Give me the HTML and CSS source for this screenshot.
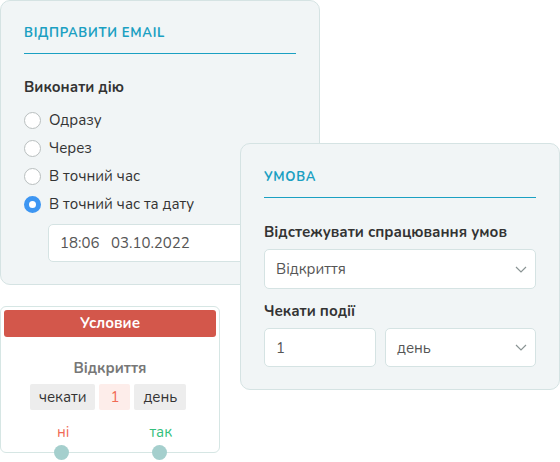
FILE: index.html
```html
<!DOCTYPE html>
<html lang="uk">
<head>
<meta charset="utf-8">
<link rel="stylesheet" href="styles.css">
</head>
<body>
<div class="canvas">
  <section class="card card-email">
    <h2 class="card-title">ВІДПРАВИТИ EMAIL</h2>
    <div class="label">Виконати дію</div>
    <ul class="radios">
      <li><span class="radio"></span>Одразу</li>
      <li><span class="radio"></span>Через</li>
      <li><span class="radio"></span>В точний час</li>
      <li><span class="radio checked"></span>В точний час та дату</li>
    </ul>
    <div class="field datetime">18:06&nbsp;&nbsp;&nbsp;03.10.2022</div>
  </section>

  <section class="node">
    <div class="node-head">Условие</div>
    <div class="node-event">Відкриття</div>
    <div class="chips">
      <span class="chip">чекати</span>
      <span class="chip chip-num">1</span>
      <span class="chip">день</span>
    </div>
    <div class="outs">
      <span class="out out-no">ні</span>
      <span class="out out-yes">так</span>
    </div>
    <span class="port port-no"></span>
    <span class="port port-yes"></span>
  </section>

  <section class="card card-cond">
    <h2 class="card-title">УМОВА</h2>
    <div class="label">Відстежувати спрацювання умов</div>
    <div class="field select">Відкриття<svg class="chev" viewBox="0 0 12 7" width="12" height="7"><path d="M1 1l5 5 5-5" fill="none" stroke="#8a9494" stroke-width="1.2"/></svg></div>
    <div class="label label2">Чекати події</div>
    <div class="row">
      <div class="field num">1</div>
      <div class="field select unit">день<svg class="chev" viewBox="0 0 12 7" width="12" height="7"><path d="M1 1l5 5 5-5" fill="none" stroke="#8a9494" stroke-width="1.2"/></svg></div>
    </div>
  </section>
</div>
</body>
</html>
```
FILE: styles.css
```css
* { box-sizing: border-box; }
html, body { margin: 0; padding: 0; background: #fff; }
body {
  font-family: "Nunito", "Lato", "Noto Sans", sans-serif;
  color: #333;
  width: 560px;
  height: 462px;
  overflow: hidden;
}
.canvas { position: relative; width: 560px; height: 462px; }

.card {
  position: absolute;
  background: #f1f5f6;
  border: 1px solid #d5e3e3;
  border-radius: 10px;
  padding: 0 23px;
}
.card-email { left: 0; top: 0; width: 320px; height: 285px; }
.card-cond { left: 240px; top: 143px; width: 320px; height: 247px; }

.card-title {
  margin: 0;
  font-size: 13px;
  font-weight: 700;
  letter-spacing: 0.7px;
  color: #1ba0c2;
  border-bottom: 1px solid #1ba0c2;
}
.card-email .card-title { padding: 23px 0 11px; }
.card-cond .card-title { padding: 24px 0 11px; }

.label {
  font-size: 15px;
  font-weight: 700;
  color: #333;
  line-height: 20px;
}
.card-email .label { margin-top: 23px; }
.card-cond .label { margin-top: 24px; }
.card-cond .label2 { margin-top: 12px; }

.radios { list-style: none; margin: 9px 0 0; padding: 0; }
.radios li {
  display: flex;
  align-items: center;
  height: 28px;
  font-size: 15px;
  color: #333;
}
.radio {
  width: 17px;
  height: 17px;
  border-radius: 50%;
  border: 1px solid #b9bfbf;
  background: #fff;
  margin-right: 8px;
  flex: none;
}
.radio.checked {
  border: 5px solid #3d96f2;
  background: #fff;
}

.field {
  background: #fff;
  border: 1px solid #d5e3e3;
  border-radius: 5px;
  font-size: 15px;
  color: #555;
  display: flex;
  align-items: center;
  padding: 0 11px;
}
.datetime {
  margin: 6px 0 0 24px;
  height: 38px;
  width: 260px;
}
.select {
  margin-top: 7px;
  height: 40px;
  justify-content: space-between;
  padding-right: 8px;
}
.row { display: flex; gap: 9px; margin-top: 7px; }
.row .field { height: 39px; margin-top: 0; }
.num { width: 112px; }
.unit { flex: 1; }
.chev { flex: none; }

.node {
  position: absolute;
  left: 0;
  top: 306px;
  width: 220px;
  height: 147px;
  border: 1px solid #d6e6e4;
  border-radius: 6px;
  background: #fff;
  padding: 3px;
  text-align: center;
}
.node-head {
  background: #d3574b;
  color: #fff;
  font-weight: 700;
  font-size: 15px;
  height: 27px;
  line-height: 27px;
  border-radius: 3px;
}
.node-event {
  margin-top: 21px;
  font-size: 15px;
  font-weight: 700;
  color: #777;
  line-height: 20px;
}
.chips {
  display: flex;
  justify-content: center;
  gap: 4px;
  margin-top: 6px;
  padding-right: 4px;
}
.chip {
  background: #ededed;
  border-radius: 2px;
  height: 26px;
  line-height: 26px;
  font-size: 15px;
  color: #333;
  padding: 0 9px;
}
.chip-num {
  background: #fdedea;
  color: #f16a55;
  width: 31px;
  padding: 0;
}
.outs {
  display: flex;
  margin-top: 13px;
  font-size: 15px;
  line-height: 18px;
}
.out-no { color: #f16a55; margin-left: 53px; }
.out-yes { color: #33c07c; margin-left: 80px; }
.port {
  position: absolute;
  bottom: -8px;
  width: 15px;
  height: 15px;
  border-radius: 50%;
  background: #a5cfcd;
}
.port-no { left: 53px; }
.port-yes { left: 151px; }
```
